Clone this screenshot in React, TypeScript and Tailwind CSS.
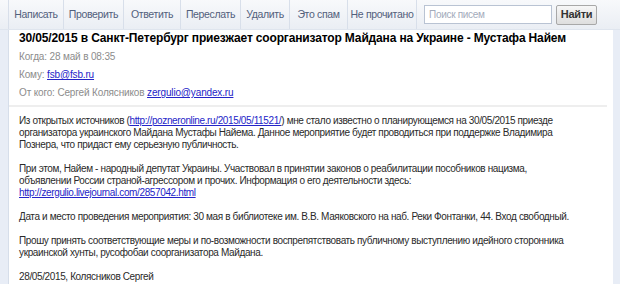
import React from "react";

const btns: [string, string][] = [
  ["Написать", "w-[55px]"],
  ["Проверить", "w-[60px]"],
  ["Ответить", "w-[57px]"],
  ["Переслать", "w-[60px]"],
  ["Удалить", "w-[49px]"],
  ["Это спам", "w-[58px]"],
  ["Не прочитано", "w-[69px]"],
];

function A({ children }: { children: React.ReactNode }) {
  return <span className="text-[#2424c8] underline">{children}</span>;
}

export default function App() {
  return (
    <div
      className="w-[620px] h-[284px] overflow-hidden bg-[#e8edf6] flex flex-col"
      style={{ fontFamily: '"Liberation Sans", Arial, sans-serif' }}
    >
      <div className="h-[30px] shrink-0 flex items-center bg-gradient-to-b from-[#f8f9fb] to-[#eaeef4] border-b border-[#dfe5ee] pl-[8px]">
        <div className="flex h-full">
          {btns.map(([b, w]) => (
            <div
              key={b}
              className={`${w} h-full flex items-center justify-center border-l border-[#d8dfea] text-[10.5px] tracking-[-0.35px] whitespace-nowrap text-[#52607c]`}
            >
              {b}
            </div>
          ))}
          <div className="h-full border-l border-[#d8dfea]" />
        </div>
        <div className="ml-[7px] w-[128px] h-[19px] border border-[#b9c3d3] bg-white flex items-center px-[4px] text-[10px] tracking-[-0.3px] text-[#a3abbb]">
          Поиск писем
        </div>
        <div className="ml-[4px] w-[41px] h-[20px] border border-[#a8a8a8] rounded-[2px] bg-gradient-to-b from-[#f7f7f7] to-[#dedede] flex items-center justify-center text-[11px] font-bold tracking-[-0.3px] text-[#333]">
          Найти
        </div>
      </div>
      <div className="flex-1 flex pl-[8px] pr-[7px] min-h-0">
        <div className="flex-1 bg-white border-l border-[#d6deea] pl-[10px] pr-[6px]">
          <div className="text-[12px] font-bold text-black leading-[16px] tracking-[-0.15px] whitespace-nowrap">
            30/05/2015 в Санкт-Петербург приезжает соорганизатор Майдана на Украине - Мустафа Найем
          </div>
          <div className="text-[10px] tracking-[-0.15px] text-[#8c8c8c] leading-[18px] mt-[2px]">
            Когда: 28 май в 08:35
          </div>
          <div className="text-[10px] tracking-[-0.15px] text-[#8c8c8c] leading-[18px]">
            Кому: <A>fsb@fsb.ru</A>
          </div>
          <div className="text-[10px] tracking-[-0.15px] text-[#8c8c8c] leading-[18px]">
            От кого: Сергей Колясников <A>zergulio@yandex.ru</A>
          </div>
          <div className="h-[2px] bg-[#eeeeee] mt-[3px] -ml-[10px]" />
          <div className="text-[10px] tracking-[-0.37px] text-[#2a2a2a] leading-[12px] mt-[8px] whitespace-nowrap">
            <p>
              Из открытых источников (<A>http://pozneronline.ru/2015/05/11521/</A>) мне стало известно о планирующемся на 30/05/2015 приезде
              <br />
              организатора украинского Майдана Мустафы Найема. Данное мероприятие будет проводиться при поддержке Владимира
              <br />
              Познера, что придаст ему серьезную публичность.
            </p>
            <p className="mt-[12px]">
              При этом, Найем - народный депутат Украины. Участвовал в принятии законов о реабилитации пособников нацизма,
              <br />
              объявлении России страной-агрессором и прочих. Информация о его деятельности здесь:
              <br />
              <A>http://zergulio.livejournal.com/2857042.html</A>
            </p>
            <p className="mt-[12px]">
              Дата и место проведения мероприятия: 30 мая в библиотеке им. В.В. Маяковского на наб. Реки Фонтанки, 44. Вход свободный.
            </p>
            <p className="mt-[12px]">
              Прошу принять соответствующие меры и по-возможности воспрепятствовать публичному выступлению идейного сторонника
              <br />
              украинской хунты, русофобаи соорганизатора Майдана.
            </p>
            <p className="mt-[12px]">28/05/2015, Колясников Сергей</p>
          </div>
        </div>
      </div>
    </div>
  );
}
